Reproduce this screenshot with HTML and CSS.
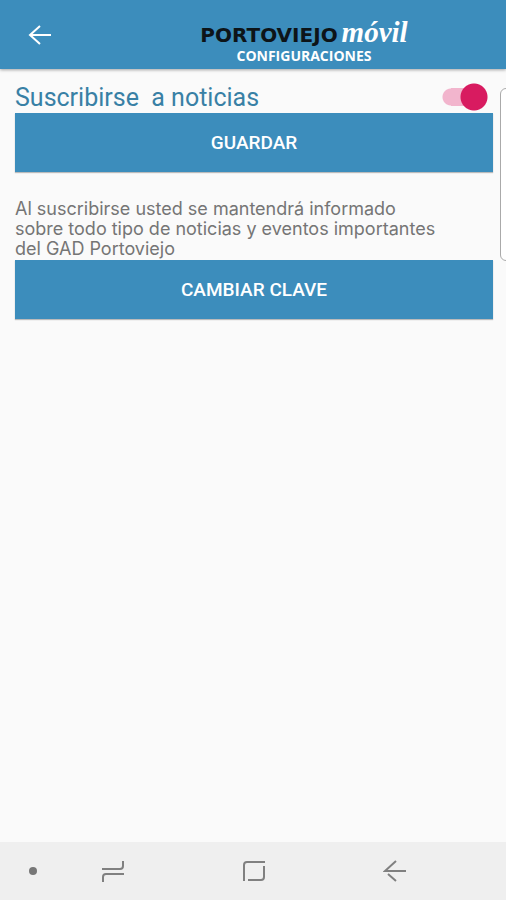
FILE: index.html
```html
<!DOCTYPE html>
<html lang="es">
<head>
    <meta charset="UTF-8">
    <meta name="viewport" content="width=device-width, initial-scale=1.0">
    <title>Portoviejo móvil - Configuraciones</title>
    <link rel="stylesheet" href="styles.css">
</head>
<body>
    <header class="toolbar">
        <button type="button" class="back" aria-label="Volver">
            <svg width="24" height="20" viewBox="0 0 24 20" fill="none" stroke="#fff" stroke-width="2">
                <path d="M23 10H2M12 1L2 10L12 19"/>
            </svg>
        </button>
        <div class="brand">
            <div class="logo"><span class="city">PORTOVIEJO</span> <span class="movil">móvil</span></div>
            <h1>CONFIGURACIONES</h1>
        </div>
    </header>

    <main class="content">
        <div class="subscribe">
            <label for="news">Suscribirse&nbsp; a noticias</label>
            <input type="checkbox" id="news" class="switch" role="switch" checked>
        </div>
        <button type="button" class="btn">GUARDAR</button>
        <p class="info">Al suscribirse usted se mantendrá informado<br>sobre todo tipo de noticias y eventos importantes<br>del GAD Portoviejo</p>
        <button type="button" class="btn">CAMBIAR CLAVE</button>
    </main>

    <!-- Edge panel handle, floats over the right side -->
    <div class="edge-handle"></div>

    <nav class="navbar">
        <span class="dot"></span>
        <button type="button" aria-label="Recientes">
            <svg width="24" height="24" viewBox="0 0 24 24" fill="none" stroke="#808080" stroke-width="2">
                <path d="M1 10H19Q22 10 22 7V2M23 15H5Q2 15 2 18V23"/>
            </svg>
        </button>
        <button type="button" aria-label="Inicio">
            <svg width="24" height="24" viewBox="0 0 24 24" fill="none" stroke="#808080" stroke-width="2">
                <path d="M2 22V6Q2 3 5 3H23M22 7V18Q22 21 19 21H6"/>
            </svg>
        </button>
        <button type="button" aria-label="Atrás">
            <svg width="24" height="24" viewBox="0 0 24 24" fill="none" stroke="#808080" stroke-width="2">
                <path d="M23 12H2L13 2M5 15L13 22"/>
            </svg>
        </button>
    </nav>
</body>
</html>
```
FILE: styles.css
```css
* {
    margin: 0;
    padding: 0;
    box-sizing: border-box;
}
body {
    background: #fafafa;
    font-family: Roboto, sans-serif;
    display: flex;
    flex-direction: column;
    min-height: 100vh;
    position: relative;
    overflow-x: hidden;
}
button {
    border: none;
    background: none;
    font-family: inherit;
    cursor: pointer;
}
.toolbar {
    display: flex;
    align-items: flex-start;
    gap: 22px;
    height: 69px;
    background: #3c8dbc;
    box-shadow: 0 1px 3px rgba(0, 0, 0, 0.35);
}
.back {
    width: 80px;
    height: 69px;
    display: flex;
    align-items: center;
    justify-content: center;
}
.brand {
    flex: 1;
    padding-top: 18px;
    text-align: center;
    color: #fff;
}
.logo {
    height: 30px;
    line-height: 28px;
    white-space: nowrap;
}
.city {
    font-family: "DejaVu Sans", sans-serif;
    font-size: 20px;
    font-weight: 700;
    color: #0d1418;
}
.movil {
    font-family: "Liberation Serif", serif;
    font-size: 29px;
    font-style: italic;
    font-weight: 700;
}
.brand h1 {
    font-family: "Open Sans", sans-serif;
    font-size: 14px;
    line-height: 16px;
    font-weight: 700;
}
.content {
    flex: 1;
    padding: 12px 13px 12px 15px;
}
.subscribe {
    display: flex;
    align-items: center;
    justify-content: space-between;
    height: 32px;
    padding-right: 4px;
}
.subscribe label {
    font-size: 25px;
    color: #3880a5;
}
.switch {
    appearance: none;
    width: 48px;
    height: 28px;
    background:
        radial-gradient(circle at 14px 14px, #eee 13px, transparent 14px),
        linear-gradient(#bbb, #bbb) 5px 5px / 34px 18px no-repeat;
    cursor: pointer;
}
.switch:checked {
    background:
        radial-gradient(circle at 33px 14px, #d81b60 13px, transparent 14px),
        radial-gradient(circle at 10px 14px, #f2b5cd 8px, transparent 9px),
        linear-gradient(#f2b5cd, #f2b5cd) 10px 5px / 22px 18px no-repeat;
}
.btn {
    display: block;
    width: 100%;
    height: 59px;
    background: #3c8dbc;
    color: #fff;
    font-size: 19px;
    font-weight: 500;
    box-shadow: 0 1px 1px rgba(0, 0, 0, 0.25);
}
.info {
    padding: 27px 0 1px;
    font-family: Inter, sans-serif;
    font-size: 18px;
    line-height: 20px;
    color: #757575;
}
.edge-handle {
    position: absolute;
    top: 88px;
    right: -6px;
    width: 12px;
    height: 173px;
    background: #fff;
    border: 1px solid #aaa;
    border-radius: 6px;
}
.navbar {
    display: flex;
    align-items: center;
    height: 58px;
    padding: 0 40px 0 24px;
    background: #efefef;
}
.navbar button {
    flex: 1;
    height: 58px;
    display: flex;
    align-items: center;
    justify-content: center;
}
.dot {
    width: 18px;
    display: flex;
    justify-content: center;
}
.dot::before {
    content: "";
    width: 8px;
    height: 8px;
    border-radius: 50%;
    background: #777;
}
```
